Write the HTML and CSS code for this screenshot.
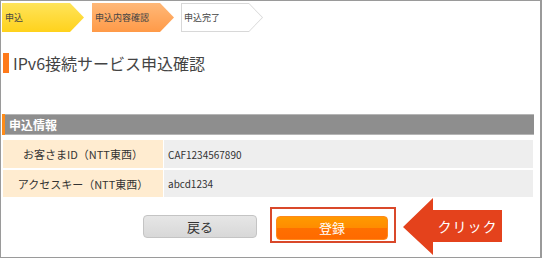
FILE: index.html
```html
<!DOCTYPE html>
<html lang="ja">
<head>
    <meta charset="UTF-8">
    <title>IPv6接続サービス申込確認</title>
    <link rel="stylesheet" href="styles.css">
</head>
<body>
    <div class="frame">
        <!-- ステップ表示 -->
        <div class="steps">
            <div class="step step-done"><span>申込</span></div>
            <div class="step step-current"><span>申込内容確認</span></div>
            <div class="step step-next"><div class="step-inner"><span>申込完了</span></div></div>
        </div>

        <h1 class="page-title"><span class="title-mark"></span>IPv6接続サービス申込確認</h1>

        <div class="section">
            <div class="section-head">申込情報</div>
            <div class="info-table">
                <div class="info-label">お客さまID（NTT東西）</div>
                <div class="info-value">CAF1234567890</div>
                <div class="info-label row2">アクセスキー（NTT東西）</div>
                <div class="info-value row2">abcd1234</div>
            </div>
        </div>

        <div class="buttons">
            <button class="btn btn-back">戻る</button>
            <div class="highlight">
                <button class="btn btn-submit">登録</button>
            </div>
        </div>

        <!-- 注釈の矢印 -->
        <div class="callout">
            <svg width="100" height="58" viewBox="0 0 100 58">
                <polygon points="0,29 30,0 30,12 99,12 99,44 30,44 30,57" fill="#e4421c"/>
            </svg>
            <span class="callout-text">クリック</span>
        </div>
    </div>
</body>
</html>
```

FILE: styles.css
```css
body, html {
    margin: 0;
    padding: 0;
    background: #fff;
    font-family: "Noto Sans CJK JP", "Liberation Sans", sans-serif;
}
.frame {
    position: relative;
    width: 542px;
    height: 258px;
    border: 1px solid #9a9a9a;
    border-right-width: 2px;
    padding-left: 1px;
    box-sizing: border-box;
    color: #333;
}
.steps {
    display: flex;
    margin-top: 2px;
    height: 29px;
}
.step {
    width: 82px;
    height: 29px;
    clip-path: polygon(0 0, 68px 0, 82px 50%, 68px 100%, 0 100%);
    font-size: 9px;
    display: flex;
    align-items: center;
    padding-left: 3px;
    box-sizing: border-box;
    color: #444;
}
.step-done {
    background: linear-gradient(#ffe45a, #ffd21c);
}
.step-current {
    margin-left: 8px;
    background: linear-gradient(#ffb878, #ff9a48);
}
.step-next {
    margin-left: 7px;
    padding: 1px;
    background: #d8d8d8;
}
.step-inner {
    width: 100%;
    height: 100%;
    background: #fff;
    clip-path: polygon(0 0, 67px 0, 80px 50%, 67px 100%, 0 100%);
    display: flex;
    align-items: center;
    padding-left: 2px;
    box-sizing: border-box;
}
.page-title {
    display: flex;
    align-items: center;
    height: 20px;
    margin: 21px 0 0 0;
    font-size: 16px;
    font-weight: normal;
    color: #444;
}
.title-mark {
    width: 6px;
    height: 20px;
    margin-left: 1px;
    margin-right: 4px;
    background: #ff7a1a;
}
.section {
    margin-top: 41px;
    width: 532px;
}
.section-head {
    height: 21px;
    line-height: 21px;
    background: #8e8e8e;
    border-left: 3px solid #ff8c1a;
    padding-left: 4px;
    color: #fff;
    font-size: 12px;
    font-weight: bold;
    box-shadow: inset 0 1px 0 #b5b5b5, inset 0 -1px 0 #b5b5b5;
}
.info-table {
    display: grid;
    grid-template-columns: 160px 1fr;
    grid-template-rows: 28px 27px;
    gap: 2px 1px;
    margin: 5px 1px 0 1px;
    font-size: 11px;
}
.info-label {
    background: #ffecd0;
    display: flex;
    align-items: center;
    justify-content: center;
}
.info-value {
    background: #eeeeee;
    display: flex;
    align-items: center;
    padding-left: 4px;
    font-size: 10px;
}
.buttons {
    display: flex;
    align-items: flex-start;
    margin-top: 10px;
    padding-left: 141px;
}
.btn {
    font-family: inherit;
    font-size: 13px;
    border-radius: 4px;
    padding: 0;
    cursor: pointer;
}
.btn-back {
    margin-top: 8px;
    width: 114px;
    height: 23px;
    border: 1px solid #c4c4c4;
    background: linear-gradient(#e6e6e6, #d8d8d8);
    color: #333;
}
.highlight {
    margin-left: 13px;
    width: 126px;
    height: 36px;
    border: 2px solid #d9482a;
    box-sizing: border-box;
    padding: 5px 0 0 4px;
}
.btn-submit {
    width: 112px;
    height: 24px;
    border: 1px solid #ff8a1a;
    background: linear-gradient(#ff9a00 0%, #ff8c00 50%, #ff7000 51%, #ff6a00 100%);
    color: #fff;
}
.callout {
    position: absolute;
    left: 402px;
    top: 197px;
    width: 100px;
    height: 58px;
}
.callout svg {
    display: block;
}
.callout-text {
    position: absolute;
    left: 30px;
    top: 12px;
    width: 69px;
    height: 32px;
    line-height: 32px;
    text-align: center;
    color: #fff;
    font-size: 14px;
    letter-spacing: 1px;
}
```
